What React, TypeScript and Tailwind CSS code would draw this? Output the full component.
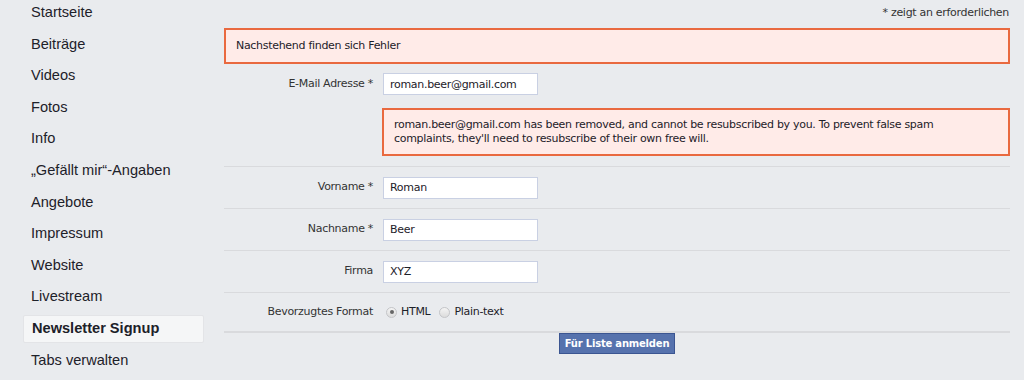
const navItems = [
  "Startseite",
  "Beiträge",
  "Videos",
  "Fotos",
  "Info",
  "„Gefällt mir“-Angaben",
  "Angebote",
  "Impressum",
  "Website",
  "Livestream",
  "Newsletter Signup",
  "Tabs verwalten",
];

function Field({ label, value }: { label: string; value: string }) {
  return (
    <div className="flex h-[42px] items-center border-t border-[#d9dadd]">
      <label className="w-[159px] pr-[10px] text-right">{label}</label>
      <input
        readOnly
        value={value}
        className="h-[22px] w-[155px] border border-[#c9d0e3] bg-white px-[6px] text-[11px] text-[#1d2129] outline-none"
      />
    </div>
  );
}

function Radio({ checked }: { checked?: boolean }) {
  return (
    <span className="flex size-[11px] items-center justify-center rounded-full border border-[#c4c5c8] bg-gradient-to-b from-[#f4f4f4] to-[#dcdcdc]">
      {checked && <span className="size-[4px] rounded-full bg-[#666]" />}
    </span>
  );
}

export default function App() {
  return (
    <div className="flex h-[380px] w-[1024px] bg-[#e9ebee]">
      <nav className="w-[224px] pl-[23px] font-['Liberation_Sans',Arial,sans-serif] text-[14.6px] text-[#1d2129]">
        {navItems.map((item, i) => {
          const active = item === "Newsletter Signup";
          return (
            <div
              key={item}
              className={
                active
                  ? "flex h-[28px] w-[181px] items-center rounded-[2px] border border-[#e3e4e7] bg-[#f5f6f7] pl-[8px] font-bold"
                  : "flex h-[28px] w-[181px] items-center pl-[8px]"
              }
              style={{ marginTop: i === 0 ? -1 : 3.6 }}
            >
              {item}
            </div>
          );
        })}
      </nav>

      <main className="w-[786px] font-['DejaVu_Sans',Verdana,sans-serif] text-[11px] tracking-[-0.3px] text-[#333]">
        <div className="flex h-[28px] items-center justify-end pb-[2px] pr-[1px]">
          * zeigt an erforderlichen
        </div>
        <div className="flex h-[36px] items-center border-2 border-[#e9693f] bg-[#ffebe8] px-[10px] text-[#1d2129]">
          Nachstehend finden sich Fehler
        </div>

        <div className="flex h-[40px] items-center">
          <label className="w-[159px] pr-[10px] text-right">E-Mail Adresse *</label>
          <input
            readOnly
            value="roman.beer@gmail.com"
            className="h-[22px] w-[155px] border border-[#c9d0e3] bg-white px-[6px] text-[11px] text-[#1d2129] outline-none"
          />
        </div>
        <div className="ml-[158px] mt-[4px] flex h-[48px] items-center border-2 border-[#e9693f] bg-[#ffebe8] px-[10px] leading-[14px] text-[#1d2129]">
          roman.beer@gmail.com has been removed, and cannot be resubscribed by you. To prevent false spam
          <br />
          complaints, they'll need to resubscribe of their own free will.
        </div>
        <div className="h-[10px]" />

        <Field label="Vorname *" value="Roman" />
        <Field label="Nachname *" value="Beer" />
        <Field label="Firma" value="XYZ" />

        <div className="flex h-[39px] items-center border-t border-[#d9dadd]">
          <span className="w-[159px] pr-[10px] text-right">Bevorzugtes Format</span>
          <span className="flex items-center gap-[4px] pl-[3px] text-[#1d2129]">
            <Radio checked />
            <span>HTML</span>
            <span className="w-[1px]" />
            <Radio />
            <span>Plain-text</span>
          </span>
        </div>
        <div className="flex justify-center border-t-2 border-[#d9dadd]">
          <button className="h-[21px] border border-[#3b5591] bg-[#5672ad] px-[5px] text-[10px] font-bold tracking-[-0.2px] text-white">
            Für Liste anmelden
          </button>
        </div>
      </main>
    </div>
  );
}
